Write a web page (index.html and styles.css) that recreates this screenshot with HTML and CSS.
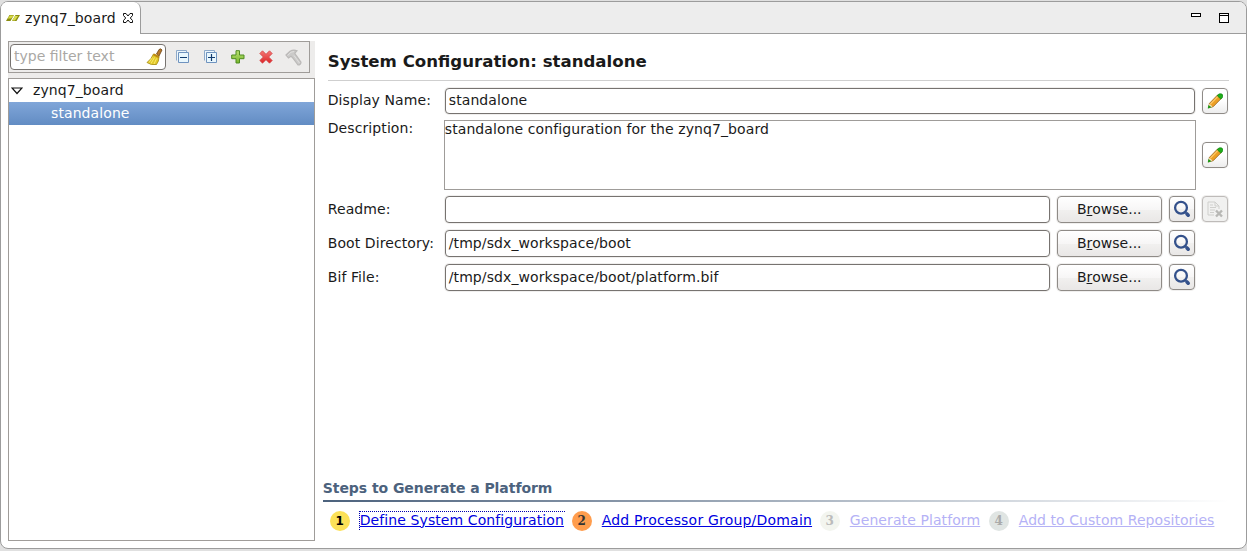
FILE: index.html
```
<!DOCTYPE html>
<html lang="en">
<head>
<meta charset="utf-8">
<title>zynq7_board</title>
<link rel="stylesheet" href="styles.css">
</head>
<body>
<svg class="defs" width="0" height="0">
  <defs>
    <linearGradient id="green" x1="0" y1="0" x2="0" y2="1"><stop offset="0" stop-color="#b9df72"/><stop offset="1" stop-color="#79b82c"/></linearGradient>
    <linearGradient id="red" x1="0" y1="0" x2="0" y2="1"><stop offset="0" stop-color="#f47a76"/><stop offset="1" stop-color="#dc2426"/></linearGradient>
    <symbol id="pencil" viewBox="0 0 16 16">
      <path d="M1.300 15 2.500 10.300 10.500 2 14.300 5.500 6.200 13.700Z" fill="#ec9f25" stroke="#8a5a18" stroke-width=".7"/>
      <path d="M3.500 11 11.200 3.200" stroke="#ffc968" stroke-width="1.200"/>
      <path d="M2.400 10.700 5.600 13.600 3 14.400 1.700 13Z" fill="#f6dfb2"/>
      <path d="M.8 15.500 1.500 12 4.400 14.300Z" fill="#169b16"/>
      <path d="M10.300 2.800C11 .5 14.600.2 15.600 1.800c.7 1.900-.4 3.600-1.900 4.100Z" fill="#1fae1a" stroke="#0c8510" stroke-width=".7"/>
    </symbol>
    <symbol id="search" viewBox="0 0 18 18">
      <circle cx="8" cy="7.700" r="5.900" fill="none" stroke="#34518b" stroke-width="2.300"/>
      <path d="M12 12 13 13" stroke="#34518b" stroke-width="2.600"/>
      <path d="M14 14 15.200 15.200" stroke="#34518b" stroke-width="3.600" stroke-linecap="round"/>
    </symbol>
  </defs>
</svg>
<div class="window">
  <header class="tabbar">
    <div class="tab">
      <svg class="logo" width="14" height="8" viewBox="0 0 14 8"><path d="M3.500 1H8L4.500 7H0Z" fill="#8a8c10"/><path d="M4 1.500H8L5 4.500H1.500Z" fill="#d6d945"/><path d="M9.500 1H14L10.500 7H6Z" fill="#8a8c10"/><path d="M9 2H12L9 6.500H6Z" fill="#d9dc4e"/></svg>
      <span class="tab-name">zynq7_board</span>
      <svg class="close" width="12" height="11" viewBox="0 0 12 11"><path d="M1.500.5H4L6 3 8 .5h2.500V2.500L8.300 5 10.500 7.500v2H8L6 7 4 9.500H1.500v-2L3.700 5 1.500 2.500Z" fill="#fff" stroke="#111"/></svg>
    </div>
    <div class="winctl">
      <svg width="10" height="4" viewBox="0 0 10 4" shape-rendering="crispEdges"><path d="M.5.5h9v3h-9Z" fill="#fff" stroke="#000"/></svg>
      <svg width="10" height="10" viewBox="0 0 10 10" shape-rendering="crispEdges"><path d="M.5.5h9v9h-9ZM0 2.500h10" fill="#fff" stroke="#000"/></svg>
    </div>
  </header>
  <main class="content">
    <aside class="side">
      <div class="toolbar">
        <div class="filter"><span>type filter text</span>
          <svg width="18" height="18" viewBox="0 0 18 18"><path d="m11.500 6 2.500-4.500q2-1.500 3 .5L14 8Z" fill="#b97a2c" stroke="#6b4313" stroke-width=".8"/><path d="M8.500 6 14 8.500q0 5-2.500 8Q6 17.500 2 14.500 6.500 11 8.500 6Z" fill="#e2c82a" stroke="#a58a10" stroke-width=".8"/><path d="m9 5.500 5.500 2.700-.7 2-5.700-2.900Z" fill="#bd8a12"/><path d="M9.500 9.500 6 15.500m5.500-5L9 16M7.500 9.500 4 14.500" stroke="#fff27a" stroke-width=".8"/></svg>
        </div>
        <svg class="tool" width="14" height="14" viewBox="0 0 14 14"><path d="M.5 10.500V.5h10v2" fill="#edf6fb" stroke="#8eaaca"/><path d="M2.500 2.500h10v10h-10Z" fill="#e9f7fd" stroke="#6f93bf"/><path d="M4 7.500h7" stroke="#123c70" stroke-width="1.200"/></svg>
        <svg class="tool" width="14" height="14" viewBox="0 0 14 14"><path d="M.5 10.500V.5h10v2" fill="#edf6fb" stroke="#8eaaca"/><path d="M2.500 2.500h10v10h-10Z" fill="#e9f7fd" stroke="#6f93bf"/><path d="M4 7.500h7M7.500 4v7" stroke="#123c70" stroke-width="1.200"/></svg>
        <svg class="tool" width="14" height="14" viewBox="0 0 14 14"><path d="M5 .7h3.500v4.300H13v3.700H8.500V13H5V8.700H.7V5H5Z" fill="url(#green)" stroke="#4f8c20"/></svg>
        <svg class="tool" width="14" height="14" viewBox="0 0 14 14"><path d="m3.500.8 3.500 3.500L10.500.8l2.700 2.700L9.700 7l3.500 3.500-2.700 2.700L7 9.700l-3.500 3.500L.8 10.500 4.300 7 .8 3.500Z" fill="url(#red)" stroke="#d3474a" stroke-width=".8"/></svg>
        <svg class="tool" width="17" height="17" viewBox="0 0 17 17"><path d="M1 6 5 2.200Q8.500.3 12 1.700L9.800 4.200l1 1.600 5.200 7.400q-.2 2.800-3 2.800L7.800 9 6 7.200 3.500 9Z" fill="#cbcac9" stroke="#bbb9b8" stroke-width="1.200"/><path d="M2.500 6.500 6 3.200 9 2.500M9 6.500l5.500 7.500" stroke="#e0dfde" fill="none"/></svg>
      </div>
      <div class="tree">
        <div class="node"><svg width="12" height="8" viewBox="0 0 12 8"><path d="M1 1h10L6 6.500Z" fill="#fff" stroke="#111" stroke-width="1.200"/></svg><span>zynq7_board</span></div>
        <div class="node selected"><span>standalone</span></div>
      </div>
    </aside>
    <section class="editor">
      <h1>System Configuration: standalone</h1>
      <div class="form">
        <div class="row"><span class="label">Display Name:</span><div class="input">standalone</div><div class="btn icon"><svg width="16" height="16"><use href="#pencil"/></svg></div></div>
        <div class="row desc"><span class="label">Description:</span><div class="area">standalone configuration for the zynq7_board</div><div class="btn icon"><svg width="16" height="16"><use href="#pencil"/></svg></div></div>
        <div class="row file"><span class="label">Readme:</span><div class="input tall"></div><div class="btn browse">B<u>r</u>owse...</div><div class="btn icon"><svg width="18" height="18"><use href="#search"/></svg></div><div class="btn icon disabled"><svg width="18" height="17" viewBox="0 0 18 17"><path d="M2 1h7l4 4v3M2 1v13h6M9 1v4h4M4 4h3M4 6.500h6M4 9h5M4 11.500h4" fill="none" stroke="#cfcfcc"/><path d="m10 9.500 6 6m0-6-6 6" stroke="#b8b8b5" stroke-width="2.400"/></svg></div></div>
        <div class="row file"><span class="label">Boot Directory:</span><div class="input tall">/tmp/sdx_workspace/boot</div><div class="btn browse">B<u>r</u>owse...</div><div class="btn icon"><svg width="18" height="18"><use href="#search"/></svg></div></div>
        <div class="row file"><span class="label">Bif File:</span><div class="input tall">/tmp/sdx_workspace/boot/platform.bif</div><div class="btn browse">B<u>r</u>owse...</div><div class="btn icon"><svg width="18" height="18"><use href="#search"/></svg></div></div>
      </div>
      <footer class="steps">
        <h2>Steps to Generate a Platform</h2>
        <div class="rule"></div>
        <div class="links">
          <span class="num one">1</span><a class="link focus">Define System Configuration</a>
          <span class="num two">2</span><a class="link wide">Add Processor Group/Domain</a>
          <span class="num three">3</span><a class="link off">Generate Platform</a>
          <span class="num four">4</span><a class="link off">Add to Custom Repositories</a>
        </div>
      </footer>
    </section>
  </main>
</div>
</body>
</html>
```
FILE: styles.css
```
* { box-sizing: border-box; }
body { margin: 0; height: 551px; padding: 1px 0 2px; background: #e0e0e0; font: 14px/18px "DejaVu Sans", sans-serif; letter-spacing: .09px; color: #1a1a1a; overflow: hidden; }
svg { display: block; flex: none; }
.defs { position: absolute; }
.window { height: 548px; border: 1px solid #9c9c9c; border-radius: 8px; background: #fff; overflow: hidden; display: flex; flex-direction: column; }
.tabbar { height: 32px; flex: none; background: #ededed; border-bottom: 1px solid #9c9c9c; display: flex; justify-content: space-between; }
.tab { width: 140px; height: 32px; background: #fff; border-right: 1px solid #9c9c9c; border-radius: 0 7px 0 0; display: flex; align-items: center; padding-left: 5px; }
.tab-name { width: 92px; margin-left: 5px; white-space: nowrap; }
.close { margin-left: 5px; }
.winctl { display: flex; width: 55px; padding-top: 11px; gap: 18px; }
.content { display: flex; flex: 1; padding: 7px 17px 7px 7px; }
.side { width: 307px; background: #edeceb; display: flex; flex-direction: column; }
.toolbar { width: 302px; height: 32px; border: 1px solid #9f9c99; display: flex; align-items: center; padding-left: 1px; }
.filter { width: 156px; height: 26px; border: 1px solid #777370; border-radius: 4px; background: #fff; color: #aaa8a5; padding: 0 2px 0 3px; display: flex; align-items: center; justify-content: space-between; white-space: nowrap; letter-spacing: 0; }
.filter span { padding-bottom: 2px; }
.tool { margin-left: 14px; }
.filter + .tool { margin-left: 10px; }
.tool:last-child { margin-left: 12px; }
.tool:nth-child(4) { margin-left: 13px; }
.tree { flex: 1; margin-top: 5px; border: 1px solid #9f9c99; background: #fff; }
.node { height: 23px; display: flex; align-items: center; padding-left: 2px; gap: 10px; }
.node span { padding-bottom: 2px; }
.node.selected { background: linear-gradient(#80a6d9, #628cc3); color: #fff; padding-left: 42px; }
.editor { width: 907px; margin-left: 8px; display: flex; flex-direction: column; }
h1 { margin: 0 0 0 5px; height: 40px; border-bottom: 1px solid #cfcfcf; font-size: 16.6px; line-height: 41px; letter-spacing: 0; }
.form { padding: 7px 0 0 5px; display: flex; flex-direction: column; gap: 7px; }
.row { display: flex; height: 27px; gap: 7px; }
.label { width: 110px; padding-top: 3px; white-space: nowrap; }
.input { flex: 1; height: 26px; border: 1px solid #777370; border-radius: 4px; background: #fff; box-shadow: 0 0 0 1px #f0efee; padding: 2px 3px; white-space: nowrap; }
.input.tall { flex: none; width: 605px; height: 27px; padding-top: 3px; }
.file .label { padding-top: 4px; }
.row:first-child { margin-bottom: -2px; }
.desc { height: 70px; margin-bottom: -1px; align-items: center; }
.desc .label { align-self: flex-start; padding-top: 0; width: 109px; margin-top: -1px; }
.area { width: 752px; height: 70px; border: 1px solid #9f9c99; margin-right: -1px; line-height: 16px; }
.row:first-child .input { flex: none; width: 750px; }
.btn { border: 1px solid #8f8b87; border-radius: 4px; background: linear-gradient(#fff, #f7f6f6 50%, #f1f0ef 52%, #e9e7e6); box-shadow: 0 0 0 1px #f0efee; display: flex; align-items: center; justify-content: center; flex: none; }
.btn.icon { width: 26px; height: 26px; }
.row:first-child .btn, .desc .btn { background: linear-gradient(#fff 50%, #ededed); box-shadow: 0 0 0 1px #fafafa; }
.browse { width: 105px; height: 27px; padding-bottom: 2px; letter-spacing: 0; }
.btn.disabled { background: #f1f1f0; border-color: #bebbb9; }
.steps { margin-top: auto; height: 62px; }
h2 { margin: 0; color: #4c627d; font-size: 14px; line-height: 18px; height: 21px; letter-spacing: -.06px; }
.rule { height: 2px; background: linear-gradient(90deg, #4c627d, #fff); }
.links { display: flex; align-items: center; height: 37px; padding-left: 7px; }
.num { width: 20px; height: 20px; border-radius: 50%; font: bold 12px/20px "DejaVu Serif", serif; text-align: center; flex: none; }
.one { background: #fce158; color: #000; font-family: "DejaVu Sans", sans-serif; }
.two { background: #ff9d4d; color: #333; }
.three { background: #f3f5ef; color: #bbb; }
.four { background: #e0e5e3; color: #aaa; }
.link { color: #0000e0; text-decoration: underline; margin-left: 10px; white-space: nowrap; flex: none; width: 210px; line-height: 16px; padding-bottom: 2px; }
.link.focus { width: 206px; margin: -1px 7px 0 9px; border: dotted #0000b0; border-width: 1px 0 0 1px; }
.link.wide { letter-spacing: .2px; }
.num.three { margin-left: 8px; }
.link.off { color: #b5b2f6; width: 131px; }
.num.four { margin-left: 8px; }
.link.off:last-child { width: 196px; letter-spacing: .06px; }
```
